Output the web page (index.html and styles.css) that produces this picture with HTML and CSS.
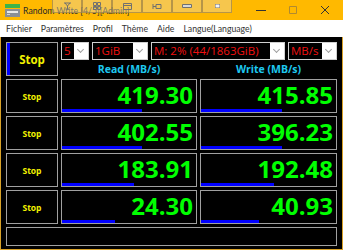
FILE: index.html
```html
<!doctype html>
<html lang="fr">
  <head>
    <meta charset="UTF-8" />
    <meta name="viewport" content="width=device-width, initial-scale=1.0" />
    <title>Random Write</title>
    <link rel="stylesheet" href="styles.css">
  </head>
  <body>
    <div class="window">
      <div class="titlebar">
        <svg class="app-icon" width="15" height="13" viewBox="0 0 15 13">
          <rect x="0" y="0" width="15" height="4" fill="#3cb44a" />
          <rect x="0" y="5" width="15" height="8" fill="#8a8f96" />
          <rect x="2" y="7" width="11" height="2" fill="#e8e8e8" />
          <rect x="2" y="10" width="3" height="1" fill="#d0d0d0" />
        </svg>
        <span class="title">Random Write [4/5][Admin]</span>

        <!-- barre de miniatures par-dessus le titre -->
        <div class="thumbbar">
          <span class="tb-btn">
            <svg width="9" height="8" viewBox="0 0 9 8"><path d="M1 1h7M2 1l2.5 3L7 1M2.5 7h4M4.5 4v3" stroke="#707070" fill="none" /></svg>
          </span>
          <span class="tb-btn">
            <svg width="8" height="8" viewBox="0 0 8 8"><path d="M.5 .5h3v3h-3zM4.5 .5h3v3h-3zM.5 4.5h3v3h-3zM4.5 4.5h3v3h-3z" stroke="#707070" fill="none" /></svg>
          </span>
          <span class="tb-btn">
            <svg width="9" height="7" viewBox="0 0 9 7"><path d="M.5 .5h8v6h-8zM.5 2.5h8" stroke="#707070" fill="none" /></svg>
          </span>
          <span class="tb-btn">
            <svg width="10" height="7" viewBox="0 0 10 7"><path d="M1 1v5M1 3.5h3M4 1.5h5v4H4z" stroke="#707070" fill="none" /></svg>
          </span>
          <span class="tb-btn">
            <svg width="10" height="4" viewBox="0 0 10 4"><path d="M.5 .5h9v3h-9z" stroke="#707070" fill="#d8d8d8" /></svg>
          </span>
          <span class="tb-btn">
            <svg width="5" height="4" viewBox="0 0 5 4"><rect width="5" height="4" fill="#f4f4f4" stroke="#707070" /></svg>
          </span>
        </div>

        <div class="winctl">
          <svg width="10" height="10" viewBox="0 0 10 10"><path d="M0 5.5h10" stroke="#333" /></svg>
          <svg width="10" height="10" viewBox="0 0 10 10"><path d="M1.5 1.5h7v7h-7z" stroke="#b08a30" fill="none" /></svg>
          <svg width="10" height="10" viewBox="0 0 10 10"><path d="M1 1l8 8M9 1l-8 8" stroke="#333" /></svg>
        </div>
      </div>

      <div class="menubar">
        <span>Fichier</span>
        <span>Paramètres</span>
        <span>Profil</span>
        <span>Thème</span>
        <span>Aide</span>
        <span>Langue(Language)</span>
      </div>

      <div class="client">
        <div class="grid">
          <div class="stop big">Stop</div>
          <div class="controls">
            <div class="selects">
              <div class="select s-count"><span class="val">5</span><span class="chev"></span></div>
              <div class="select s-size"><span class="val">1GiB</span><span class="chev"></span></div>
              <div class="select s-drive"><span class="val">M: 2% (44/1863GiB)</span><span class="chev"></span></div>
              <div class="select s-unit"><span class="val">MB/s</span><span class="chev"></span></div>
            </div>
            <div class="heads">
              <div>Read (MB/s)</div>
              <div>Write (MB/s)</div>
            </div>
          </div>

          <div class="stop">Stop</div>
          <div class="cell"><div class="num">419.30</div><div class="bar" style="width: 80px"></div></div>
          <div class="cell"><div class="num">415.85</div><div class="bar" style="width: 81px"></div></div>

          <div class="stop">Stop</div>
          <div class="cell"><div class="num">402.55</div><div class="bar" style="width: 80px"></div></div>
          <div class="cell"><div class="num">396.23</div><div class="bar" style="width: 81px"></div></div>

          <div class="stop">Stop</div>
          <div class="cell"><div class="num">183.91</div><div class="bar" style="width: 72px"></div></div>
          <div class="cell"><div class="num">192.48</div><div class="bar" style="width: 73px"></div></div>

          <div class="stop">Stop</div>
          <div class="cell"><div class="num">24.30</div><div class="bar" style="width: 53px"></div></div>
          <div class="cell"><div class="num">40.93</div><div class="bar" style="width: 58px"></div></div>

          <div class="status"></div>
        </div>
      </div>
    </div>
  </body>
</html>
```

FILE: styles.css
```css
html,
body {
  margin: 0;
  padding: 0;
}
body {
  width: 343px;
  height: 250px;
  overflow: hidden;
  font-family: "Open Sans", "DejaVu Sans", sans-serif;
}
.window {
  display: flex;
  flex-direction: column;
  height: 250px;
}
.titlebar {
  position: relative;
  display: flex;
  align-items: center;
  height: 20px;
  padding-left: 5px;
  background-color: #ffb900;
}
.app-icon {
  margin-right: 3px;
}
.title {
  font-family: Lato, "Open Sans", sans-serif;
  font-size: 8.7px;
  color: #2a2a2a;
}
.thumbbar {
  position: absolute;
  left: 52px;
  top: 0;
  display: flex;
  height: 13px;
}
.tb-btn {
  display: flex;
  align-items: center;
  justify-content: center;
  width: 30px;
  height: 13px;
  box-sizing: border-box;
  border: 1px solid rgba(130, 110, 70, 0.55);
  border-top: none;
  background-color: rgba(235, 215, 170, 0.45);
}
.winctl {
  margin-left: auto;
  display: flex;
  gap: 22px;
  padding-right: 13px;
}
.menubar {
  display: flex;
  align-items: center;
  height: 17px;
  padding-left: 6px;
  gap: 9px;
  background-color: #fff;
  font-family: Lato, "Open Sans", sans-serif;
  font-size: 8.7px;
  color: #333;
}
.client {
  flex: 1;
  background-color: #000;
  border: 1px solid #d9a228;
  border-top: none;
  padding: 5px 5px 3px 5px;
}
.grid {
  display: grid;
  grid-template-columns: 52px 136px 137px;
  grid-template-rows: 34px repeat(4, 34px) 19px;
  column-gap: 3px;
  row-gap: 3px;
}
.stop {
  display: flex;
  align-items: center;
  justify-content: center;
  border: 1px solid #a0a0a0;
  background-color: #000;
  color: #f2f200;
  font-weight: bold;
  font-size: 8.5px;
}
.stop.big {
  font-size: 11.5px;
  box-shadow: inset 3px 0 0 #0000ff;
}
.controls {
  grid-column: 2 / 4;
  display: flex;
  flex-direction: column;
}
.selects {
  display: flex;
  gap: 3px;
  height: 18px;
}
.select {
  display: flex;
  box-sizing: border-box;
  height: 18px;
  border: 1px solid #d0d0d0;
  background-color: #fff;
}
.select .val {
  flex: 1;
  background-color: #000;
  color: #f01010;
  font-size: 11.5px;
  line-height: 16px;
  padding-left: 2px;
  white-space: nowrap;
  overflow: hidden;
}
.chev {
  width: 14px;
  position: relative;
}
.chev::after {
  content: "";
  position: absolute;
  left: 4px;
  top: 4px;
  width: 4px;
  height: 4px;
  border-right: 1px solid #a0a0a0;
  border-bottom: 1px solid #a0a0a0;
  transform: rotate(45deg);
}
.s-count {
  width: 28px;
}
.s-size {
  width: 56px;
}
.s-drive {
  width: 134px;
}
.s-unit {
  width: 49px;
}
.heads {
  flex: 1;
  display: grid;
  grid-template-columns: 136px 137px;
  column-gap: 3px;
  align-items: center;
  padding-top: 2px;
  color: #1ec8f0;
  font-weight: bold;
  font-size: 10.5px;
  text-align: center;
}
.cell {
  display: flex;
  flex-direction: column;
  border: 1px solid #a0a0a0;
  background-color: #000;
}
.num {
  height: 29px;
  line-height: 29px;
  padding-right: 3px;
  text-align: right;
  font-size: 24px;
  font-weight: bold;
  color: #00ff00;
}
.bar {
  height: 3px;
  background-color: #0000ff;
}
.status {
  grid-column: 1 / 4;
  border: 1px solid #a0a0a0;
  background-color: #000;
}
```
